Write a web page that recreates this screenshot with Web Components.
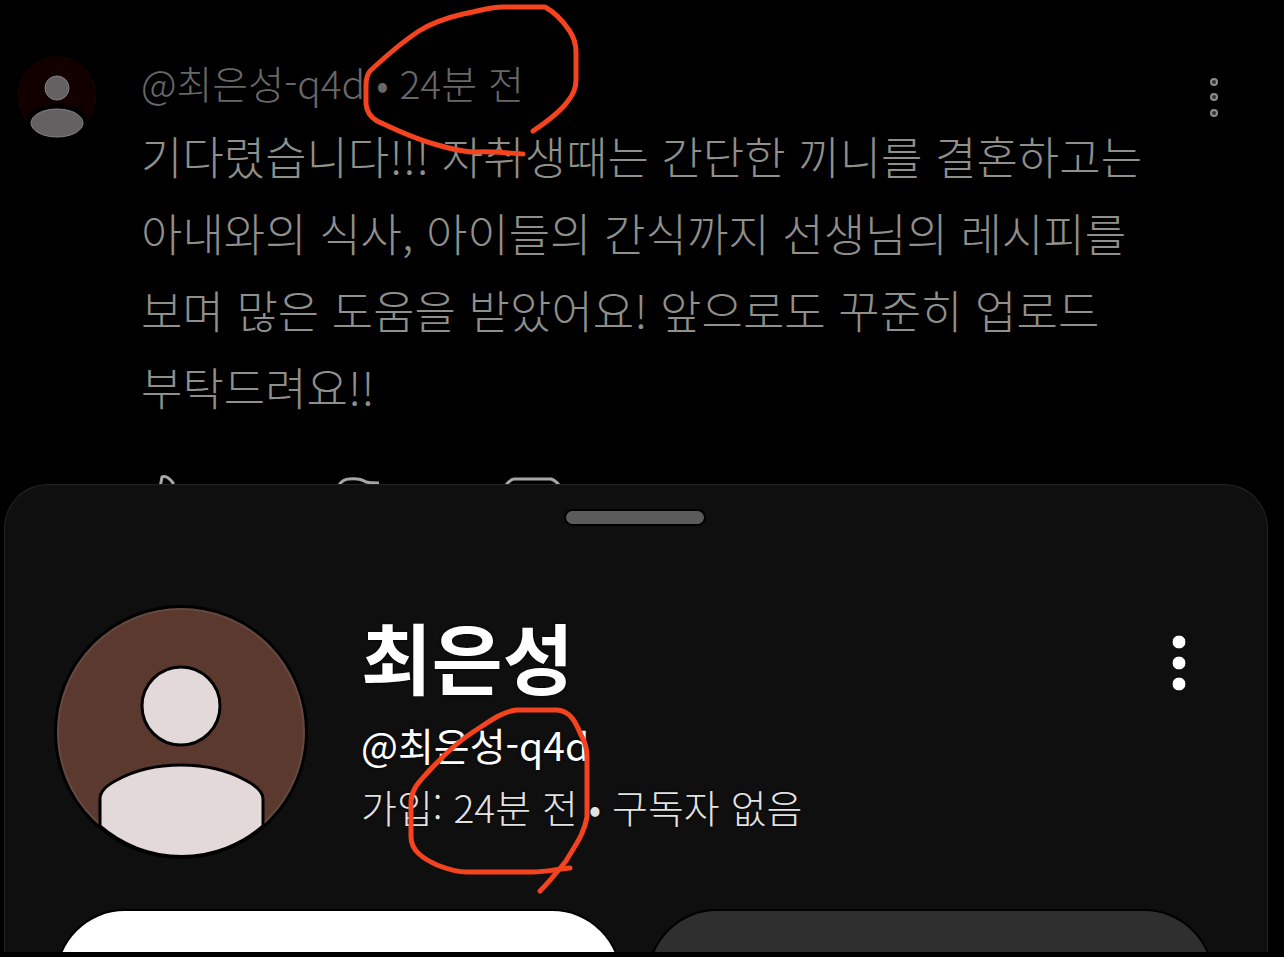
<!DOCTYPE html>
<html lang="ko">
<head>
  <meta charset="utf-8">
  <meta name="viewport" content="width=device-width, initial-scale=1">
  <title>댓글</title>
  <style>
    body {
      margin: 0;
      background: #000;
      font-family: "Noto Sans CJK KR", "Noto Sans", sans-serif;
    }
  </style>
</head>
<body>
  <comment-screen>
    <comment-item slot="comment">
      <user-avatar slot="avatar" class="dim"></user-avatar>
      <span slot="author">@최은성-q4d • 24분 전</span>
      기다렸습니다!!! 자취생때는 간단한 끼니를 결혼하고는<br>
      아내와의 식사, 아이들의 간식까지 선생님의 레시피를<br>
      보며 많은 도움을 받았어요! 앞으로도 꾸준히 업로드<br>
      부탁드려요!!
    </comment-item>
    <profile-sheet slot="sheet">
      <user-avatar slot="avatar"></user-avatar>
      <span slot="name">최은성</span>
      <span slot="handle">@최은성-q4d</span>
      <span slot="meta">가입: 24분 전 • 구독자 없음</span>
    </profile-sheet>
    <pen-marks slot="marks"></pen-marks>
  </comment-screen>

  <script>
    class CommentScreen extends HTMLElement {
      constructor() {
        super();
        this.attachShadow({ mode: 'open' }).innerHTML = `
          <style>
            :host {
              display: flex;
              flex-direction: column;
              position: relative;
              box-sizing: border-box;
              height: 100vh;
              padding-bottom: 5px;
              overflow: hidden;
            }
          </style>
          <slot name="comment"></slot>
          <slot name="sheet"></slot>
          <slot name="marks"></slot>
        `;
      }
    }

    class UserAvatar extends HTMLElement {
      constructor() {
        super();
        this.attachShadow({ mode: 'open' }).innerHTML = `
          <style>
            :host {
              display: block;
              flex: none;
              width: 248px;
              height: 248px;
              --disc: #5b392e;
              --ring: #664a42;
              --person: #e2d9d8;
              --edge: #000;
            }

            :host(.dim) {
              width: 80px;
              height: 80px;
              --disc: #120001;
              --ring: #1c0507;
              --person: #656061;
              --edge: #858181;
            }

            svg {
              display: block;
              width: 100%;
              height: 100%;
              overflow: visible;
            }

            .small,
            :host(.dim) .large {
              display: none;
            }

            :host(.dim) .small {
              display: block;
            }
          </style>
          <svg class="large" viewBox="0 0 248 248" aria-hidden="true">
            <circle cx="124" cy="124" r="125" fill="none" stroke="#000" stroke-width="4"/>
            <circle cx="124" cy="124" r="123" fill="var(--disc)" stroke="var(--ring)" stroke-width="2"/>
            <circle cx="124" cy="98" r="39" fill="var(--person)" stroke="var(--edge)" stroke-width="3"/>
            <path d="M43 218V191C43 183 50 177 60 172C78 162 100 157 124 157S170 162 188 172C198 177 206 183 206 191V218A124 124 0 0 1 43 218Z" fill="var(--person)" stroke="var(--edge)" stroke-width="3"/>
          </svg>
          <svg class="small" viewBox="0 0 80 80" aria-hidden="true">
            <circle cx="40" cy="40" r="39" fill="var(--disc)" stroke="var(--ring)" stroke-dasharray="9 3"/>
            <path d="M10 58Q40 38 70 58V80H10Z" fill="#000"/>
            <circle cx="40" cy="32" r="12" fill="var(--person)" stroke="var(--edge)"/>
            <ellipse cx="40" cy="67" rx="26" ry="14" fill="var(--person)" stroke="var(--edge)"/>
          </svg>
        `;
      }
    }

    class MoreButton extends HTMLElement {
      constructor() {
        super();
        this.attachShadow({ mode: 'open' }).innerHTML = `
          <style>
            :host {
              display: block;
              flex: none;
            }

            button {
              display: block;
              width: 44px;
              height: 64px;
              padding: 0;
              border: none;
              background: transparent;
              cursor: pointer;
            }

            svg {
              display: block;
            }

            .small,
            :host(.dim) .large {
              display: none;
            }

            :host(.dim) .small {
              display: block;
            }
          </style>
          <button type="button" aria-label="더보기">
            <svg class="large" width="44" height="64" fill="#fff" stroke="#000">
              <circle cx="22" cy="11" r="7"/>
              <circle cx="22" cy="32" r="7"/>
              <circle cx="22" cy="53" r="7"/>
            </svg>
            <svg class="small" width="44" height="64" fill="#333" stroke="#8b8b8b" stroke-width="2">
              <circle cx="22" cy="17" r="3"/>
              <circle cx="22" cy="32" r="3"/>
              <circle cx="22" cy="48" r="3"/>
            </svg>
          </button>
        `;
      }
    }

    class CommentItem extends HTMLElement {
      constructor() {
        super();
        this.attachShadow({ mode: 'open' }).innerHTML = `
          <style>
            :host {
              display: flex;
              flex: none;
              align-items: flex-start;
              box-sizing: border-box;
              height: 484px;
              padding: 56px 48px 0 17px;
              overflow: hidden;
              font-weight: 300;
            }

            .content {
              flex: 1;
              min-width: 0;
              margin-left: 44px;
            }

            .author {
              font-size: 39px;
              line-height: 52px;
              color: #686868;
              white-space: nowrap;
            }

            .text {
              margin: 9px 0 0;
              font-size: 45px;
              line-height: 77px;
              color: #8f8f8b;
              white-space: nowrap;
            }

            .actions {
              display: flex;
              gap: 126px;
              margin-top: 49px;
            }

            .actions button {
              width: 56px;
              height: 56px;
              padding: 0;
              border: none;
              background: transparent;
            }

            .actions svg {
              display: block;
              fill: none;
              stroke: #a4a8a6;
              stroke-width: 3;
            }

            more-button {
              margin: 9px 0 0 -44px;
            }
          </style>
          <slot name="avatar"></slot>
          <div class="content">
            <div class="author"><slot name="author"></slot></div>
            <p class="text"><slot></slot></p>
            <div class="actions">
              <button type="button" aria-label="좋아요">
                <svg width="56" height="56"><path d="M17 24L21 3Q26 1 32 9L29 20H48L43 46H16ZM6 24H16V46H6Z"/></svg>
              </button>
              <button type="button" aria-label="싫어요">
                <svg width="56" height="56"><path d="M16 11Q20 5 26 5Q37 4 43 8Q46 9 58 9Q52 20 50 32H42L30 52L24 48L28 34H10Z"/></svg>
              </button>
              <button type="button" aria-label="답글">
                <svg width="56" height="56"><path d="M1 11Q6 5 9 5H46Q50 6 54 11V40H16L2 52Z"/></svg>
              </button>
            </div>
          </div>
          <more-button class="dim"></more-button>
        `;
      }
    }

    class ProfileSheet extends HTMLElement {
      constructor() {
        super();
        this.attachShadow({ mode: 'open' }).innerHTML = `
          <style>
            :host {
              display: flex;
              flex: 1;
              flex-direction: column;
              min-height: 0;
              box-sizing: border-box;
              margin: 0 16px 0 4px;
              padding: 0 55px 0 52px;
              overflow: hidden;
              border: 1px solid #242424;
              border-bottom: none;
              border-radius: 44px 44px 0 0;
              background: #0f0f0f;
            }

            .grip {
              flex: none;
              align-self: center;
              width: 138px;
              height: 13px;
              margin-top: 26px;
              border-radius: 7px;
              background: #5b5b5b;
              box-shadow: 0 0 0 2px #000;
            }

            .profile {
              display: flex;
              flex: none;
              align-items: flex-start;
              margin-top: 84px;
            }

            .info {
              flex: 1;
              min-width: 0;
              margin-left: 56px;
              color: #fff;
              white-space: nowrap;
              text-shadow: 0 0 3px #000;
            }

            h1 {
              margin: 0;
              font-size: 77px;
              font-weight: 700;
              line-height: 96px;
            }

            .handle,
            .meta {
              font-size: 39px;
              line-height: 62px;
            }

            .handle {
              margin-top: 9px;
            }

            .meta {
              font-weight: 300;
              color: #e2e2e2;
            }

            more-button {
              margin: 23px 11px 0 0;
            }

            .buttons {
              display: flex;
              flex: none;
              gap: 29px;
              margin-top: 55px;
            }

            .buttons button {
              flex: 1;
              height: 136px;
              border: none;
              border-radius: 68px;
              background: #2f2f2f;
              box-shadow: 0 0 0 2px #000;
            }

            .buttons .primary {
              background: #fff;
            }
          </style>
          <div class="grip"></div>
          <div class="profile">
            <slot name="avatar"></slot>
            <div class="info">
              <h1><slot name="name"></slot></h1>
              <div class="handle"><slot name="handle"></slot></div>
              <div class="meta"><slot name="meta"></slot></div>
            </div>
            <more-button></more-button>
          </div>
          <div class="buttons">
            <button type="button" class="primary" aria-label="구독"></button>
            <button type="button" aria-label="채널 보기"></button>
          </div>
        `;
      }
    }

    // hand-drawn circles laid over both timestamps
    class PenMarks extends HTMLElement {
      constructor() {
        super();
        this.attachShadow({ mode: 'open' }).innerHTML = `
          <style>
            :host {
              display: block;
              position: absolute;
              top: 0;
              left: 0;
              pointer-events: none;
            }

            svg {
              display: block;
              fill: none;
              stroke: #f4431f;
              stroke-width: 5;
              stroke-linecap: round;
              stroke-linejoin: round;
            }
          </style>
          <svg width="640" height="900" aria-hidden="true">
            <path d="M533 131C545 123 560 112 568 101Q576 91 576 80V52Q576 40 569 30Q558 14 545 7H503C488 7 476 12 463 14C446 18 430 24 419 31C402 42 385 57 370 71Q366 76 366 85V104Q367 115 377 121C394 129 412 138 434 144C448 148 461 152 475 152C491 151 507 153 523 154"/>
            <path d="M570 868C557 869 546 872 533 872H467C456 872 447 869 437 865C424 859 411 851 411 837V801C412 788 420 781 428 772C440 759 456 743 473 732C486 724 502 711 517 710H557C571 711 576 723 581 735Q587 745 587 757V817C584 835 574 847 566 861C558 871 549 882 540 891"/>
          </svg>
        `;
      }
    }

    customElements.define('user-avatar', UserAvatar);
    customElements.define('more-button', MoreButton);
    customElements.define('comment-item', CommentItem);
    customElements.define('profile-sheet', ProfileSheet);
    customElements.define('pen-marks', PenMarks);
    customElements.define('comment-screen', CommentScreen);
  </script>
</body>
</html>
